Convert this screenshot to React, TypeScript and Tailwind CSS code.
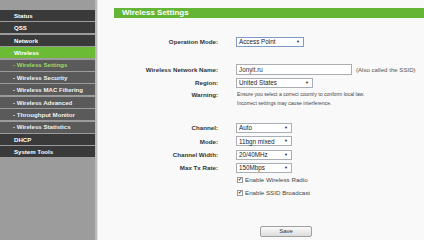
import React from 'react';

const menu: { label: string; kind: 'main' | 'sub' | 'active' | 'activeSub' }[] = [
  { label: 'Status', kind: 'main' },
  { label: 'QSS', kind: 'main' },
  { label: 'Network', kind: 'main' },
  { label: 'Wireless', kind: 'active' },
  { label: '- Wireless Settings', kind: 'activeSub' },
  { label: '- Wireless Security', kind: 'sub' },
  { label: '- Wireless MAC Filtering', kind: 'sub' },
  { label: '- Wireless Advanced', kind: 'sub' },
  { label: '- Throughput Monitor', kind: 'sub' },
  { label: '- Wireless Statistics', kind: 'sub' },
  { label: 'DHCP', kind: 'main' },
  { label: 'System Tools', kind: 'main' },
];

const rowClass = {
  main: 'bg-[#3a3a3a] text-white pl-[14px]',
  active: 'bg-[#6cbb37] text-white pl-[14px]',
  sub: 'bg-[#5a5a5a] text-[#f2f2f2] pl-[13px]',
  activeSub: 'bg-[#5a5a5a] text-[#9ddc5e] pl-[13px]',
};

const Select: React.FC<{ value: string; w: string; focus?: boolean }> = ({ value, w, focus }) => (
  <div
    className={`${w} h-[10px] bg-white border ${focus ? 'border-[#7c9cc4]' : 'border-[#a9aeb4]'} flex items-center justify-between pl-[2px] pr-[3px] text-[6.3px] text-[#222]`}
  >
    <span>{value}</span>
    <span className="text-[4px]">▼</span>
  </div>
);

const Label: React.FC<{ children: React.ReactNode }> = ({ children }) => (
  <div className="text-right font-bold text-[6.2px] text-[#333]">{children}</div>
);

const Check: React.FC<{ label: string }> = ({ label }) => (
  <div className="flex items-center gap-[2px] text-[6.2px] text-[#444]">
    <span className="w-[6px] h-[6px] border border-[#9a9a9a] bg-white flex items-center justify-center text-[5px] leading-none text-[#333]">
      ✔
    </span>
    <span>{label}</span>
  </div>
);

const Row: React.FC<{ label?: string; className?: string; children?: React.ReactNode }> = ({ label, className, children }) => (
  <div className={`grid grid-cols-[104px_1fr] gap-x-[18px] items-center ${className ?? ''}`}>
    <Label>{label}</Label>
    <div>{children}</div>
  </div>
);

export default function App() {
  return (
    <div className="w-[424px] h-[240px] flex bg-[#f9f9f9] overflow-hidden" style={{ fontFamily: '"Liberation Sans", Arial, sans-serif' }}>
      <aside className="w-[95px] shrink-0 bg-[#9c9c9c] pt-[10px] flex flex-col gap-[1.4px]">
        {menu.map((m) => (
          <div key={m.label} className={`h-[11px] flex items-center font-bold text-[6.1px] ${rowClass[m.kind]}`}>
            {m.label}
          </div>
        ))}
      </aside>
      <div className="w-[2px] shrink-0 bg-[#b9b9b9]" />
      <main className="flex-1 border-l border-[#e2e2e2] pl-[16px] flex flex-col">
        <div className="mt-[8px] h-[10px] bg-[#64b435] text-white font-bold text-[8px] pl-[8px] flex items-center">
          Wireless Settings
        </div>
        <div className="mt-[14px] h-px bg-[#8db79d]" />
        <Row label="Operation Mode:" className="mt-[5px] h-[10px]">
          <Select value="Access Point" w="w-[68px]" focus />
        </Row>
        <div className="mt-[14px] h-px bg-[#8db79d]" />
        <Row label="Wireless Network Name:" className="mt-[3px] h-[11px]">
          <div className="flex items-center gap-[4px]">
            <div className="w-[116px] h-[11px] bg-white border border-[#abadb3] pl-[2px] text-[6.3px] text-[#333] flex items-center">
              Jonyit.ru
            </div>
            <span className="text-[6.1px] text-[#555]">(Also called the SSID)</span>
          </div>
        </Row>
        <Row label="Region:" className="mt-[3px] h-[10px]">
          <Select value="United States" w="w-[77px]" />
        </Row>
        <div className="grid grid-cols-[104px_1fr] gap-x-[18px] mt-[2px] leading-[9px]">
          <Label>Warning:</Label>
          <div className="text-[5.1px] text-[#444] pl-[1px]">
            <div>Ensure you select a correct country to conform local law.</div>
            <div>Incorrect settings may cause interference.</div>
          </div>
        </div>
        <div className="mt-[15px] flex flex-col gap-[3.3px]">
          <Row label="Channel:" className="h-[10px]">
            <Select value="Auto" w="w-[56px]" />
          </Row>
          <Row label="Mode:" className="h-[10px]">
            <Select value="11bgn mixed" w="w-[56px]" />
          </Row>
          <Row label="Channel Width:" className="h-[10px]">
            <Select value="20/40MHz" w="w-[56px]" />
          </Row>
          <Row label="Max Tx Rate:" className="h-[10px]">
            <Select value="150Mbps" w="w-[56px]" />
          </Row>
        </div>
        <Row className="mt-[2px] h-[10px]">
          <div className="pl-[1px]">
            <Check label="Enable Wireless Radio" />
          </div>
        </Row>
        <Row className="mt-[4px] h-[10px]">
          <div className="pl-[1px]">
            <Check label="Enable SSID Broadcast" />
          </div>
        </Row>
        <div className="mt-[16px] h-px bg-[#8db79d]" />
        <div className="mt-[3px] pl-[146px]">
          <button className="w-[52px] h-[11px] rounded-[2px] border border-[#a0a0a0] bg-gradient-to-b from-[#fbfbfb] to-[#dcdcdc] text-[6px] text-[#333]">
            Save
          </button>
        </div>
      </main>
    </div>
  );
}
